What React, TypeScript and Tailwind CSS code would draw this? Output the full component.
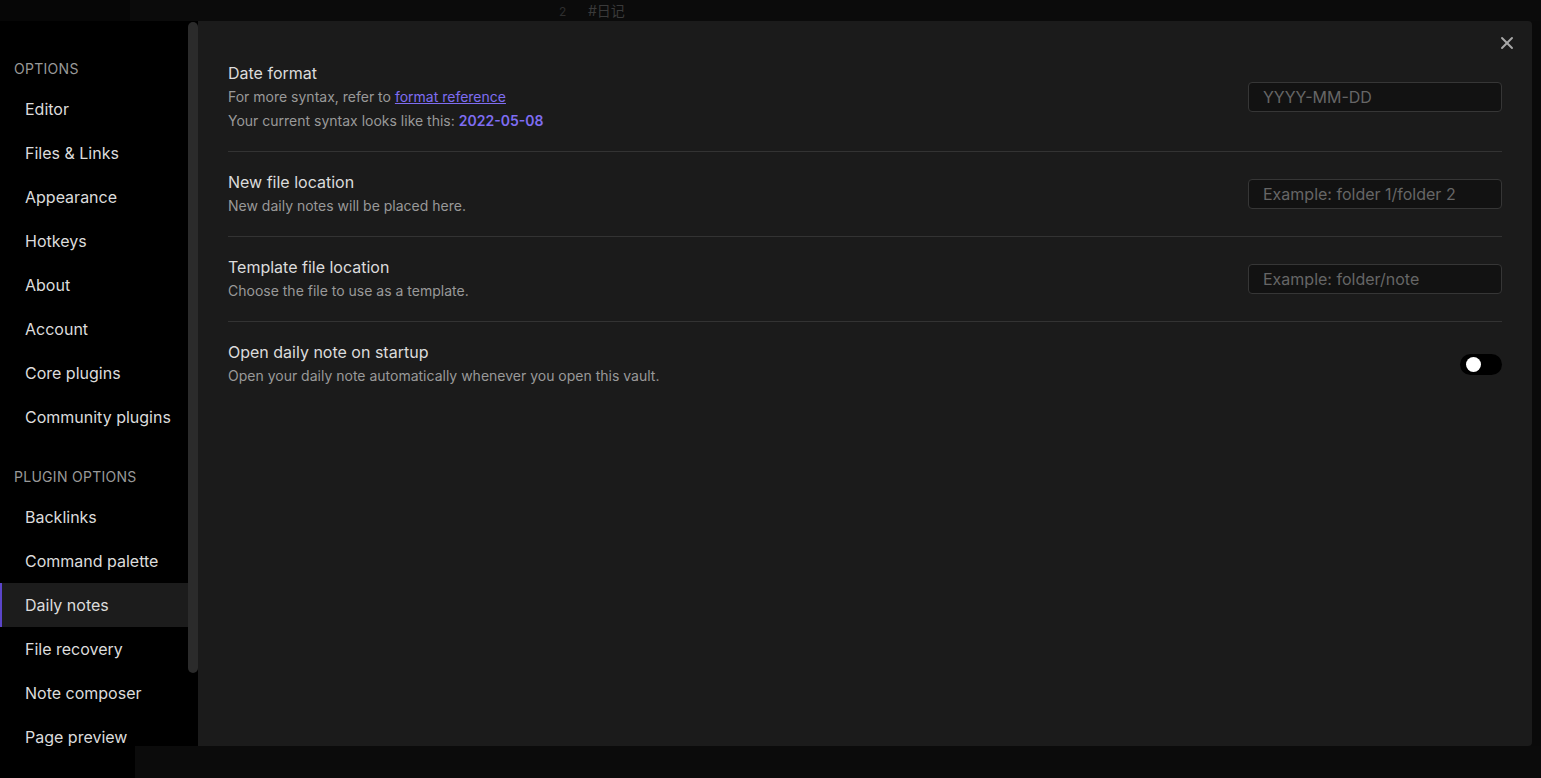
import { X } from "lucide-react";
import type { ReactNode } from "react";

type NavGroup = { title: string; items: string[] };

const groups: NavGroup[] = [
  {
    title: "Options",
    items: [
      "Editor",
      "Files & Links",
      "Appearance",
      "Hotkeys",
      "About",
      "Account",
      "Core plugins",
      "Community plugins",
    ],
  },
  {
    title: "Plugin options",
    items: [
      "Backlinks",
      "Command palette",
      "Daily notes",
      "File recovery",
      "Note composer",
      "Page preview",
    ],
  },
];

const ACTIVE = "Daily notes";

function SettingRow({
  name,
  children,
  control,
  first,
  last,
}: {
  name: string;
  children: ReactNode;
  control: ReactNode;
  first?: boolean;
  last?: boolean;
}) {
  return (
    <div
      className={`flex items-center gap-6 ${first ? "pt-0" : "pt-[18px]"} ${last ? "pb-[18px]" : "pb-[18px] border-b border-[#333333]"}`}
    >
      <div className="flex-1 min-w-0">
        <div className="text-[16px] leading-6 text-[#dcdcdc]">{name}</div>
        <div className="text-[14px] leading-6 text-[#999999]">{children}</div>
      </div>
      {control}
    </div>
  );
}

function TextInput({ placeholder }: { placeholder: string }) {
  return (
    <input
      type="text"
      placeholder={placeholder}
      className="w-[254px] h-[30px] rounded-[4px] border border-[#363636] bg-[#121212] px-[14px] text-[16px] text-[#dadada] placeholder:text-[#666666] outline-none"
    />
  );
}

export default function App() {
  return (
    <div
      className="flex h-[778px] w-full flex-col overflow-hidden bg-[#0a0a0a]"
      style={{ fontFamily: "Inter, 'Noto Sans CJK SC', sans-serif" }}
    >
      {/* app behind the modal */}
      <div className="flex h-[21px] shrink-0">
        <div className="w-[130px] bg-[#060606]" />
        <div className="relative flex-1 bg-[#0b0b0b]">
          <span className="absolute left-[429px] top-[4px] text-[12px] leading-4 text-[#2e2e2e]">2</span>
          <span className="absolute left-[458px] top-[3px] text-[14px] leading-4 text-[#3a3a3a]">#日记</span>
        </div>
      </div>

      <div className="flex h-[725px] shrink-0 pr-[9px]">
        <div className="flex flex-1 overflow-hidden rounded-r-[4px]">
          {/* sidebar */}
          <nav className="w-[188px] shrink-0 overflow-hidden bg-black pt-[38px]">
            {groups.map((g, gi) => (
              <div key={g.title} className={gi > 0 ? "mt-[28px]" : ""}>
                <div className="mb-[8px] pl-[14px] text-[14px] leading-5 uppercase tracking-[0.02em] text-[#999999]">
                  {g.title}
                </div>
                {g.items.map((item) => (
                  <div
                    key={item}
                    className={`flex h-[44px] items-center text-[16px] text-[#dcdcdc] ${
                      item === ACTIVE
                        ? "bg-[#1c1c1c] border-l-2 border-[#5b45c9] pl-[23px]"
                        : "pl-[25px]"
                    }`}
                  >
                    {item}
                  </div>
                ))}
              </div>
            ))}
          </nav>

          {/* scrollbar */}
          <div className="w-[10px] shrink-0 bg-black pt-px">
            <div className="h-[651px] rounded-full bg-[#2b2b2b]" />
          </div>

          {/* content */}
          <main className="relative flex-1 bg-[#1b1b1b] px-[30px] pt-[40px]">
            <button className="absolute right-[15px] top-[12px] text-[#a8a8a8]">
              <X size={20} strokeWidth={2.25} />
            </button>

            <SettingRow first name="Date format" control={<TextInput placeholder="YYYY-MM-DD" />}>
              <div>
                For more syntax, refer to{" "}
                <a className="text-[#7f6df2] underline">format reference</a>
              </div>
              <div>
                Your current syntax looks like this:{" "}
                <span className="font-semibold text-[#7f6df2]">2022-05-08</span>
              </div>
            </SettingRow>

            <SettingRow
              name="New file location"
              control={<TextInput placeholder="Example: folder 1/folder 2" />}
            >
              New daily notes will be placed here.
            </SettingRow>

            <SettingRow
              name="Template file location"
              control={<TextInput placeholder="Example: folder/note" />}
            >
              Choose the file to use as a template.
            </SettingRow>

            <SettingRow
              name="Open daily note on startup"
              last
              control={
                <div className="flex h-[21px] w-[42px] items-center rounded-full bg-black px-[6px]">
                  <div className="h-[15px] w-[15px] rounded-full bg-white" />
                </div>
              }
            >
              Open your daily note automatically whenever you open this vault.
            </SettingRow>
          </main>
        </div>
      </div>

      <div className="flex flex-1">
        <div className="w-[135px] bg-black" />
        <div className="flex-1 bg-[#0b0b0b]" />
      </div>
    </div>
  );
}
